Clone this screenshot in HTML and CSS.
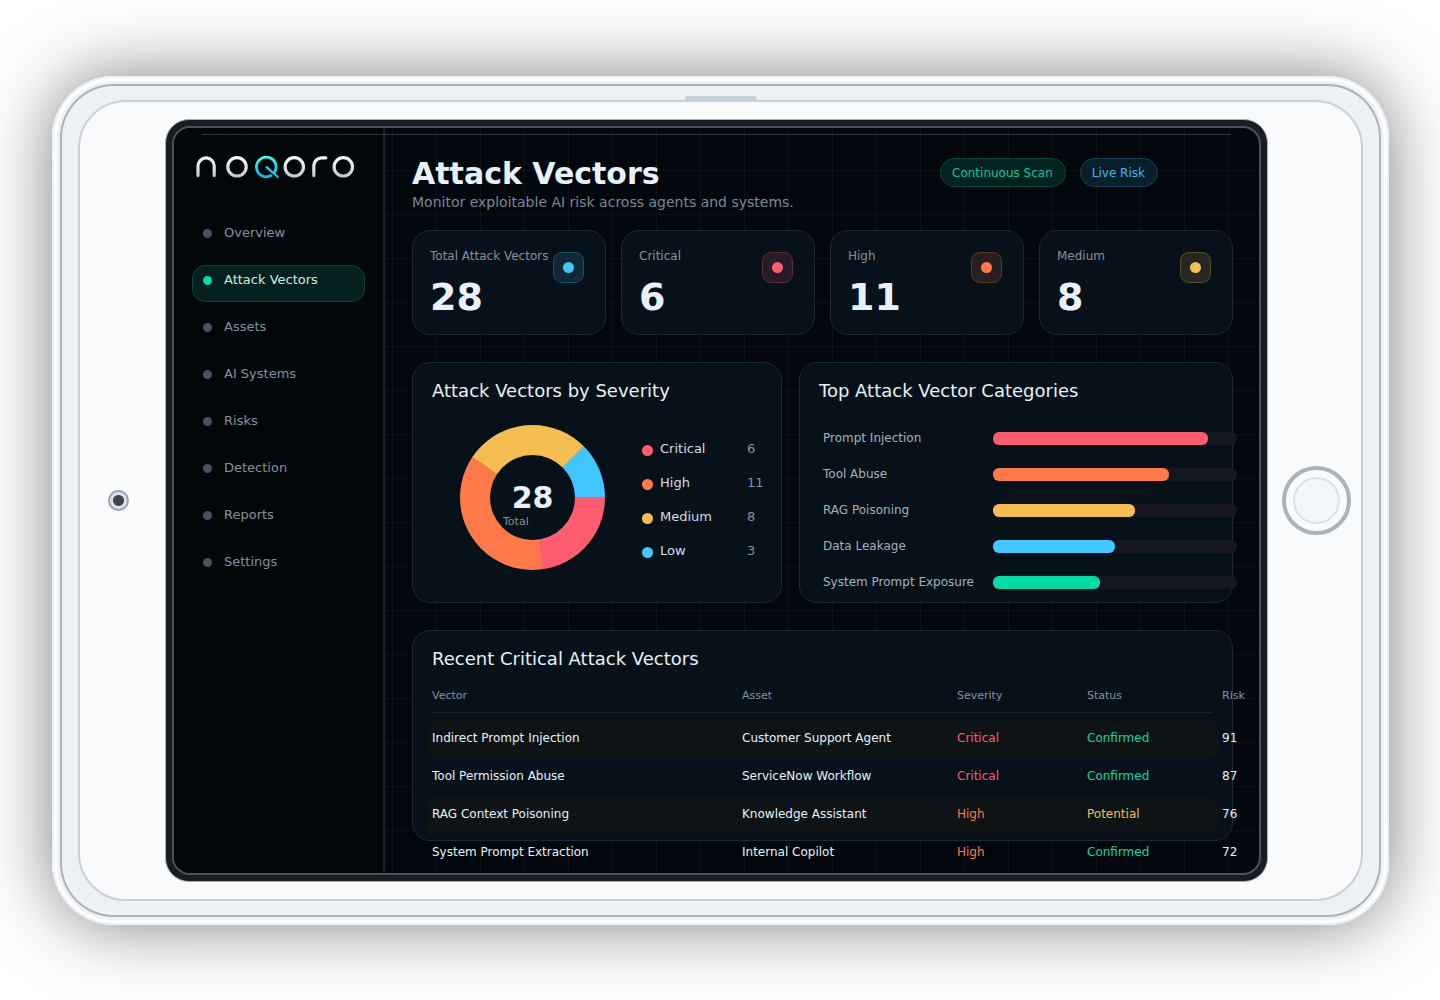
FILE: index.html
```html
<!DOCTYPE html>
<html lang="en">
<head>
  <meta charset="utf-8">
  <meta name="viewport" content="width=device-width, initial-scale=1.0">
  <title>Attack Vectors - noqoro</title>
  <link rel="stylesheet" href="styles.css">
</head>
<body>
  <div class="device">
    <div class="speaker"></div>
    <div class="bezel">
      <div class="camera"></div>
      <div class="frame">
        <div class="screen">
          <aside class="sidebar">
            <svg class="logo" viewBox="0 0 160 24" role="img" aria-label="noqoro">
              <defs>
                <linearGradient id="silver" gradientUnits="userSpaceOnUse" x1="0" y1="0" x2="0" y2="22">
                  <stop offset="0" stop-color="#ffffff"/>
                  <stop offset="1" stop-color="#c4c2c6"/>
                </linearGradient>
                <linearGradient id="cyan" gradientUnits="userSpaceOnUse" x1="0" y1="0" x2="0" y2="22">
                  <stop offset="0" stop-color="#43fbf4"/>
                  <stop offset="1" stop-color="#0bb4f5"/>
                </linearGradient>
              </defs>
              <g fill="none" stroke="url(#silver)" stroke-width="3.2" stroke-linecap="round">
                <path d="M2 19.6V10a8.1 8.1 0 0 1 16.2 0v9.6"/>
                <circle cx="41" cy="10.8" r="9.2"/>
                <circle cx="98.3" cy="10.8" r="9.2"/>
                <path d="M117.8 19.6V9.8a8 8 0 0 1 8-8h4"/>
                <circle cx="147.3" cy="10.8" r="9.2"/>
              </g>
              <g fill="none" stroke="url(#cyan)" stroke-linecap="round">
                <path d="M78.4 16.5A9.8 9.8 0 1 0 75 19.6" stroke-width="2.8"/>
                <path d="M70.6 11.2l11.2 9.8" stroke-width="2.2"/>
              </g>
            </svg>
            <nav class="nav">
              <a class="nav-item" href="#">Overview</a>
              <a class="nav-item active" href="#" aria-current="page">Attack Vectors</a>
              <a class="nav-item" href="#">Assets</a>
              <a class="nav-item" href="#">AI Systems</a>
              <a class="nav-item" href="#">Risks</a>
              <a class="nav-item" href="#">Detection</a>
              <a class="nav-item" href="#">Reports</a>
              <a class="nav-item" href="#">Settings</a>
            </nav>
          </aside>

          <main class="main">
            <header class="header">
              <div>
                <h1>Attack Vectors</h1>
                <p class="subtitle">Monitor exploitable AI risk across agents and systems.</p>
              </div>
              <div class="pills">
                <span class="pill green">Continuous Scan</span>
                <span class="pill blue">Live Risk</span>
              </div>
            </header>

            <section class="stats">
              <div class="card stat">
                <div>
                  <div class="stat-label">Total Attack Vectors</div>
                  <div class="stat-value">28</div>
                </div>
                <span class="stat-icon blue"></span>
              </div>
              <div class="card stat">
                <div>
                  <div class="stat-label">Critical</div>
                  <div class="stat-value">6</div>
                </div>
                <span class="stat-icon red"></span>
              </div>
              <div class="card stat">
                <div>
                  <div class="stat-label">High</div>
                  <div class="stat-value">11</div>
                </div>
                <span class="stat-icon orange"></span>
              </div>
              <div class="card stat">
                <div>
                  <div class="stat-label">Medium</div>
                  <div class="stat-value">8</div>
                </div>
                <span class="stat-icon yellow"></span>
              </div>
            </section>

            <section class="charts">
              <div class="card panel">
                <h2>Attack Vectors by Severity</h2>
                <div class="severity">
                  <div class="donut">
                    <div class="donut-hole">
                      <strong>28</strong>
                      <span>Total</span>
                    </div>
                  </div>
                  <ul class="legend">
                    <li class="red"><span>Critical</span><b>6</b></li>
                    <li class="orange"><span>High</span><b>11</b></li>
                    <li class="yellow"><span>Medium</span><b>8</b></li>
                    <li class="blue"><span>Low</span><b>3</b></li>
                  </ul>
                </div>
              </div>
              <div class="card panel">
                <h2>Top Attack Vector Categories</h2>
                <ul class="bars">
                  <li><span>Prompt Injection</span><div class="track"><div class="fill red" style="width: 88%"></div></div></li>
                  <li><span>Tool Abuse</span><div class="track"><div class="fill orange" style="width: 72%"></div></div></li>
                  <li><span>RAG Poisoning</span><div class="track"><div class="fill yellow" style="width: 58%"></div></div></li>
                  <li><span>Data Leakage</span><div class="track"><div class="fill blue" style="width: 50%"></div></div></li>
                  <li><span>System Prompt Exposure</span><div class="track"><div class="fill green" style="width: 44%"></div></div></li>
                </ul>
              </div>
            </section>

            <section class="card panel recent">
              <h2>Recent Critical Attack Vectors</h2>
              <table>
                <thead>
                  <tr>
                    <th class="col-vector">Vector</th>
                    <th class="col-asset">Asset</th>
                    <th class="col-severity">Severity</th>
                    <th class="col-status">Status</th>
                    <th class="col-risk">Risk</th>
                  </tr>
                </thead>
                <tbody>
                  <tr>
                    <td>Indirect Prompt Injection</td>
                    <td>Customer Support Agent</td>
                    <td class="red">Critical</td>
                    <td class="green">Confirmed</td>
                    <td>91</td>
                  </tr>
                  <tr>
                    <td>Tool Permission Abuse</td>
                    <td>ServiceNow Workflow</td>
                    <td class="red">Critical</td>
                    <td class="green">Confirmed</td>
                    <td>87</td>
                  </tr>
                  <tr>
                    <td>RAG Context Poisoning</td>
                    <td>Knowledge Assistant</td>
                    <td class="orange">High</td>
                    <td class="yellow">Potential</td>
                    <td>76</td>
                  </tr>
                  <tr>
                    <td>System Prompt Extraction</td>
                    <td>Internal Copilot</td>
                    <td class="orange">High</td>
                    <td class="green">Confirmed</td>
                    <td>72</td>
                  </tr>
                </tbody>
              </table>
            </section>
          </main>
        </div>
      </div>
      <button class="home" type="button" aria-label="Home"></button>
    </div>
  </div>
</body>
</html>
```

FILE: styles.css
```css
:root {
  --red: #ff5c70;
  --orange: #ff7a48;
  --yellow: #f5bd52;
  --blue: #42c6ff;
  --green: #00dca5;
  --text: #e8f1f9;
  --muted: #8392a1;
  --card-bg: #07111a;
  --card-border: #1a2a34;
}

* {
  box-sizing: border-box;
  margin: 0;
  padding: 0;
}

body {
  font-family: "DejaVu Sans", Verdana, sans-serif;
  font-size: 12px;
  color: var(--text);
  background: #fff;
  padding: 76px 51px 75px 52px;
}

ul {
  list-style: none;
}

.red { --tone: var(--red); }
.orange { --tone: var(--orange); }
.yellow { --tone: var(--yellow); }
.blue { --tone: var(--blue); }
.green { --tone: var(--green); }

/* Tablet */
.device {
  position: relative;
  padding: 24px 26px;
  border-radius: 62px;
  background: #edf1f6;
  box-shadow:
    inset 0 0 0 2px #edf1f6,
    inset 0 0 0 5px #fff,
    inset 0 0 0 8px #edf1f6,
    inset 0 0 0 10px #a9b3ba,
    0 0 70px rgba(0, 0, 0, 0.5);
}

.bezel {
  display: grid;
  grid-template-columns: 85px 1fr 93px;
  align-items: center;
  justify-items: center;
  padding: 17px 0;
  border: 2px solid #c8d1d8;
  border-radius: 48px;
  background: #f9fafc;
}

.speaker {
  position: absolute;
  top: 20px;
  left: 50%;
  width: 72px;
  height: 6px;
  margin-left: -36px;
  border-radius: 3px;
  background: #c8d0d9;
}

.camera {
  width: 21px;
  height: 21px;
  margin-right: 8px;
  border: 2px solid #9ca3b0;
  border-radius: 50%;
  background: radial-gradient(circle, #40464d 5px, #dfe3eb 6px);
}

.home {
  display: flex;
  width: 69px;
  height: 69px;
  margin-left: 4px;
  padding: 7px;
  border: 4px solid #a9b3ba;
  border-radius: 50%;
  background: #f9fafc;
}

.home::before {
  content: "";
  flex: 1;
  align-self: stretch;
  border: 2px solid #dcdfe5;
  border-radius: 50%;
  background: #f3f6f9;
}

.frame {
  justify-self: stretch;
  padding: 6px;
  border: 1px solid #a9afb5;
  border-radius: 24px;
  background: #181d24;
}

.screen {
  position: relative;
  display: flex;
  overflow: hidden;
  border: 2px solid #4a535d;
  border-radius: 18px;
  background: #02060d;
}

.screen::after {
  content: "";
  position: absolute;
  top: 6px;
  left: 28px;
  right: 28px;
  height: 1px;
  background: rgba(255, 255, 255, 0.2);
}

/* Sidebar */
.sidebar {
  flex: 0 0 211px;
  padding: 28px 18px;
  border-right: 2px solid #13222d;
  background: #010609;
}

.logo {
  display: block;
  width: 160px;
  height: 24px;
  margin: 0 0 38px 4px;
}

.nav {
  display: grid;
  gap: 10px;
}

.nav-item {
  display: flex;
  gap: 12px;
  width: 173px;
  height: 37px;
  padding: 5px 10px;
  border: 1px solid transparent;
  border-radius: 13px;
  font-size: 13px;
  line-height: 17px;
  color: var(--muted);
  text-decoration: none;
}

.nav-item::before {
  content: "";
  width: 9px;
  height: 9px;
  margin-top: 5px;
  border-radius: 50%;
  background: #405566;
}

.nav-item.active {
  color: #c8efe4;
  border-color: #05443a;
  background: #042120;
}

.nav-item.active::before {
  background: var(--green);
}

/* Main */
.main {
  flex: 1;
  min-width: 0;
  padding: 28px 26px 32px 27px;
  background-image:
    linear-gradient(to right, #0d1215 1px, transparent 1px),
    linear-gradient(to bottom, #0d1215 1px, transparent 1px);
  background-size: 44px 44px;
  background-position: 7px 42px;
}

.header {
  display: flex;
  justify-content: space-between;
  align-items: flex-start;
  padding-right: 75px;
  margin-bottom: 18px;
}

h1 {
  font-size: 30px;
  line-height: 36px;
}

.subtitle {
  font-size: 14px;
  line-height: 20px;
  color: #7b8997;
}

.pills {
  display: flex;
  gap: 14px;
  margin-top: 2px;
}

.pill {
  padding: 2px 12px 0 11px;
  border: 1px solid color-mix(in srgb, var(--tone) 32%, #02060d);
  border-radius: 15px;
  line-height: 25px;
  white-space: nowrap;
  color: color-mix(in srgb, var(--tone) 92%, #02060d);
  background: color-mix(in srgb, var(--tone) 13%, #02060d);
}

.card {
  border: 1px solid var(--card-border);
  border-radius: 18px;
  background: var(--card-bg);
}

.stats {
  display: grid;
  grid-template-columns: repeat(4, 1fr);
  gap: 15px;
  margin-bottom: 27px;
}

.stat {
  display: flex;
  justify-content: space-between;
  padding: 17px 21px 14px 17px;
}

.stat-label {
  line-height: 16px;
  white-space: nowrap;
  color: var(--muted);
}

.stat-value {
  margin-top: 10px;
  font-size: 38px;
  font-weight: bold;
  line-height: 46px;
}

.stat-icon {
  flex: none;
  display: grid;
  place-items: center;
  width: 31px;
  height: 31px;
  margin-top: 4px;
  border: 1px solid color-mix(in srgb, var(--tone) 35%, var(--card-bg));
  border-radius: 9px;
  background: color-mix(in srgb, var(--tone) 13%, var(--card-bg));
}

.stat-icon::before {
  content: "";
  width: 11px;
  height: 11px;
  border-radius: 50%;
  background: var(--tone);
}

.charts {
  display: grid;
  grid-template-columns: 370fr 434fr;
  gap: 17px;
  margin-bottom: 27px;
}

.panel {
  min-width: 0;
  padding: 16px 19px 0;
}

h2 {
  font-size: 18px;
  font-weight: normal;
  line-height: 24px;
}

.severity {
  display: flex;
  gap: 37px;
  padding: 22px 0 32px 28px;
}

.donut {
  flex: none;
  display: grid;
  place-items: center;
  width: 145px;
  height: 145px;
  border-radius: 50%;
  background: conic-gradient(from 90deg, var(--red) 82deg, var(--orange) 82deg 214deg, var(--yellow) 214deg 315deg, var(--blue) 315deg);
}

.donut-hole {
  width: 85px;
  height: 85px;
  padding-top: 26px;
  border-radius: 50%;
  text-align: center;
  background: var(--card-bg);
}

.donut-hole strong {
  display: block;
  font-size: 30px;
  line-height: 34px;
}

.donut-hole span {
  display: block;
  padding-left: 13px;
  font-size: 11px;
  line-height: 14px;
  text-align: left;
  color: var(--muted);
}

.legend {
  padding-top: 7px;
  font-size: 13px;
  line-height: 34px;
}

.legend li {
  display: flex;
  align-items: center;
}

.legend li::before {
  content: "";
  width: 11px;
  height: 11px;
  margin: 3px 7px 0 0;
  border-radius: 50%;
  background: var(--tone);
}

.legend span {
  width: 87px;
  color: #d3dde6;
}

.legend b {
  font-weight: normal;
  color: var(--muted);
}

/* The tracks run a little past the panel edge */
.bars {
  margin-right: -24px;
  padding: 17px 0 0 4px;
}

.bars li {
  display: flex;
  align-items: center;
  height: 36px;
}

.bars span {
  flex: 0 0 170px;
  color: #a4b1bd;
}

.track {
  flex: 1;
  border-radius: 6px;
  background: #15181f;
}

.fill {
  height: 13px;
  border-radius: 6px;
  background: var(--tone);
}

/* Table spills out of its panel to the right and bottom */
.recent {
  height: 211px;
}

table {
  width: calc(100% + 42px);
  margin-left: -6px;
  table-layout: fixed;
  border-spacing: 0;
  background: linear-gradient(#1c2228, #1c2228) no-repeat 6px 41px / calc(100% - 42px) 1px;
}

.col-asset { width: 215px; }
.col-severity { width: 130px; }
.col-status { width: 132px; }
.col-risk { width: 30px; }

th {
  height: 50px;
  padding-bottom: 2px;
  font-size: 11px;
  font-weight: normal;
  text-align: left;
  color: var(--muted);
}

td {
  height: 38px;
  padding-bottom: 4px;
  border-bottom: 1px solid transparent;
  background-clip: padding-box;
  color: var(--tone, var(--text));
}

th:first-child,
td:first-child {
  padding-left: 6px;
}

th:last-child,
td:last-child {
  padding-left: 3px;
}

tbody tr:nth-child(odd) td:not(:last-child) {
  background-color: #0e1316;
}

td:first-child {
  border-radius: 10px 0 0 10px;
}

td:nth-child(4) {
  border-radius: 0 10px 10px 0;
}
```
